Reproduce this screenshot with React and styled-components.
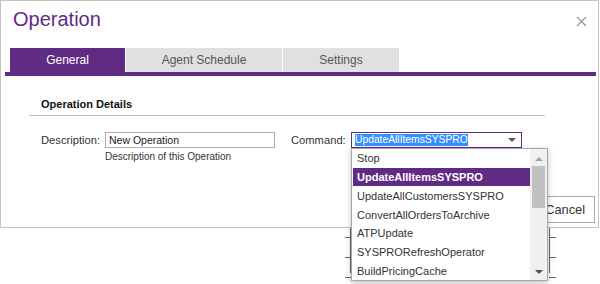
import styled, { createGlobalStyle } from 'styled-components';

const Global = createGlobalStyle`
  body {
    margin: 0;
    background: #fff;
    font-family: "Liberation Sans", Arial, sans-serif;
  }
`;

const PURPLE = '#5f2b85';

const Page = styled.div`
  position: relative;
  width: 600px;
  height: 284px;
  overflow: hidden;
`;

const Backdrop = styled.svg`
  position: absolute;
  left: 0;
  top: 0;
`;

const Dialog = styled.div`
  position: relative;
  box-sizing: border-box;
  width: 599px;
  height: 228px;
  border: 1px solid #c4c4c4;
  background: #fff;
  display: flex;
  flex-direction: column;
`;

const Header = styled.div`
  display: flex;
  justify-content: space-between;
  align-items: flex-start;
  padding: 7px 11px 0 12px;
  height: 40px;
`;

const Title = styled.h1`
  margin: 0;
  font-size: 20px;
  font-weight: normal;
  color: ${PURPLE};
`;

const Close = styled.svg`
  margin-top: 8px;
`;

const Tabs = styled.div`
  display: flex;
  gap: 1px;
  margin-left: 9px;
`;

const Tab = styled.div`
  width: ${(p) => p.$w}px;
  height: 24px;
  display: flex;
  align-items: center;
  justify-content: center;
  font-size: 12px;
  background: ${(p) => (p.$active ? PURPLE : '#e0e0e0')};
  color: ${(p) => (p.$active ? '#fff' : '#555')};
`;

const Bar = styled.div`
  height: 4px;
  margin: 0 2px 0 4px;
  background: ${PURPLE};
`;

const Body = styled.div`
  padding: 22px 0 0 28px;
`;

const Section = styled.div`
  width: 504px;
  border-bottom: 1px solid #c0c0c0;
  padding: 0 0 5px 12px;
  font-size: 11px;
  font-weight: bold;
  color: #111;
`;

const FormRow = styled.div`
  display: flex;
  align-items: flex-start;
  margin-top: 16px;
  padding-left: 12px;
`;

const Label = styled.label`
  width: ${(p) => p.$w}px;
  font-size: 11.2px;
  color: #333;
  line-height: 16px;
`;

const Field = styled.div`
  display: flex;
  flex-direction: column;
  margin-right: ${(p) => p.$mr || 0}px;
`;

const Input = styled.div`
  box-sizing: border-box;
  width: 170px;
  height: 16px;
  border: 1px solid #b0b0b0;
  font-size: 10.5px;
  line-height: 14px;
  padding-left: 3px;
  color: #222;
`;

const Help = styled.div`
  margin-top: 3px;
  font-size: 10px;
  color: #333;
`;

const Select = styled.div`
  box-sizing: border-box;
  width: 171px;
  height: 16px;
  border: 1px solid ${PURPLE};
  display: flex;
  align-items: center;
  justify-content: space-between;
  padding: 0 5px 0 3px;
`;

const Selected = styled.span`
  background: #3390ff;
  color: #fff;
  font-size: 10.3px;
  line-height: 12px;
`;

const Caret = styled.span`
  width: 0;
  height: 0;
  border-left: 4px solid transparent;
  border-right: 4px solid transparent;
  border-top: 4px solid #555;
`;

const Footer = styled.div`
  margin-top: auto;
  display: flex;
  justify-content: flex-end;
  padding: 0 3px 4px 0;
`;

const Button = styled.button`
  box-sizing: border-box;
  width: 58px;
  height: 27px;
  background: #fff;
  border: 1px solid #aaa;
  font-family: inherit;
  font-size: 12.8px;
  color: #333;
  text-align: right;
  padding: 0 9px 0 0;
`;

const List = styled.div`
  position: absolute;
  left: 351px;
  top: 148px;
  width: 197px;
  height: 133px;
  box-sizing: border-box;
  border: 1px solid #a8a8a8;
  background: #fff;
  box-shadow: 0 2px 6px rgba(0, 0, 0, 0.25);
  display: flex;
  padding-left: 1px;
`;

const Items = styled.div`
  flex: 1;
  display: flex;
  flex-direction: column;
`;

const Item = styled.div`
  height: 19px;
  display: flex;
  align-items: center;
  padding-left: 4px;
  font-size: 11px;
  color: ${(p) => (p.$on ? '#fff' : '#333')};
  background: ${(p) => (p.$on ? PURPLE : 'transparent')};
  font-weight: ${(p) => (p.$on ? 'bold' : 'normal')};
`;

const Scroll = styled.div`
  width: 17px;
  background: #f0f0f0;
  display: flex;
  flex-direction: column;
  align-items: center;
`;

const Arrow = styled.span`
  width: 0;
  height: 0;
  border-left: 4px solid transparent;
  border-right: 4px solid transparent;
  ${(p) => (p.$up ? 'border-bottom: 4px solid #a3a3a3;' : 'border-top: 4px solid #505050;')}
  margin: ${(p) => (p.$up ? '8px 0 0' : 'auto 0 6px')};
`;

const Thumb = styled.div`
  width: 13px;
  height: 42px;
  margin-top: 5px;
  background: #c1c1c1;
`;

const items = [
  'Stop',
  'UpdateAllItemsSYSPRO',
  'UpdateAllCustomersSYSPRO',
  'ConvertAllOrdersToArchive',
  'ATPUpdate',
  'SYSPRORefreshOperator',
  'BuildPricingCache',
];

export default function App() {
  return (
    <Page>
      <Global />
      <Backdrop width="600" height="284">
        <g stroke="#666" strokeWidth="1">
          <line x1="350.5" y1="227" x2="350.5" y2="273" />
          <line x1="345" y1="237.5" x2="351" y2="237.5" />
          <line x1="345" y1="257.5" x2="351" y2="257.5" />
          <line x1="345" y1="277.5" x2="351" y2="277.5" />
          <line x1="549.5" y1="228" x2="549.5" y2="273" />
          <line x1="549" y1="237.5" x2="556" y2="237.5" />
          <line x1="549" y1="257.5" x2="556" y2="257.5" />
          <line x1="549" y1="277.5" x2="556" y2="277.5" />
        </g>
      </Backdrop>
      <Dialog>
        <Header>
          <Title>Operation</Title>
          <Close width="11" height="11" viewBox="0 0 11 11">
            <path d="M1 1L10 10M10 1L1 10" stroke="#999" strokeWidth="1.3" />
          </Close>
        </Header>
        <Tabs>
          <Tab $active $w={115}>General</Tab>
          <Tab $w={156}>Agent Schedule</Tab>
          <Tab $w={116}>Settings</Tab>
        </Tabs>
        <Bar />
        <Body>
          <Section>Operation Details</Section>
          <FormRow>
            <Label $w={64}>Description:</Label>
            <Field $mr={16}>
              <Input>New Operation</Input>
              <Help>Description of this Operation</Help>
            </Field>
            <Label $w={60}>Command:</Label>
            <Field>
              <Select>
                <Selected>UpdateAllItemsSYSPRO</Selected>
                <Caret />
              </Select>
            </Field>
          </FormRow>
        </Body>
        <Footer>
          <Button>Cancel</Button>
        </Footer>
      </Dialog>
      <List>
        <Items>
          {items.map((t, i) => (
            <Item key={t} $on={i === 1}>{t}</Item>
          ))}
        </Items>
        <Scroll>
          <Arrow $up />
          <Thumb />
          <Arrow />
        </Scroll>
      </List>
    </Page>
  );
}
